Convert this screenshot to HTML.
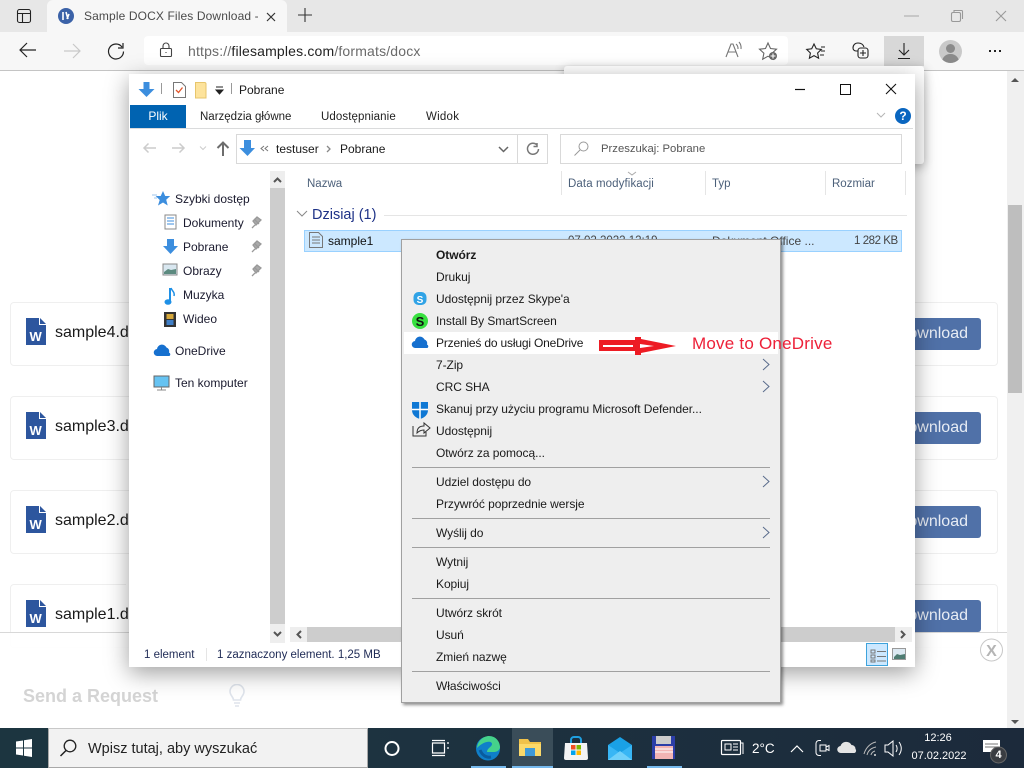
<!DOCTYPE html>
<html lang="pl"><head><meta charset="utf-8"><title>Sample DOCX Files Download</title>
<style>
html,body{margin:0;padding:0;width:1024px;height:768px;overflow:hidden;background:#fff;font-family:"Liberation Sans","Noto Sans CJK JP",sans-serif;font-size:12px;color:#1a1a1a}
div,svg{position:absolute}
.t{white-space:nowrap;line-height:16px}
.card{left:10px;width:986px;height:62px;border:1px solid #efefef;border-radius:4px;background:#fff}
.btn{left:880px;width:101px;height:32px;background:#5071a8;border-radius:3px;color:#e8edf5;font-size:16px;line-height:31px;text-align:right}
.btn span{padding-right:13px}
.m{left:436px;color:#1a1a1a;font-size:12px;letter-spacing:-.06px}
.sep{left:412px;width:358px;height:1px;background:#a0a0a0}
.n{color:#1a1a2e;font-size:12px}
</style></head><body>

<!-- browser chrome -->
<div style="left:0;top:0;width:1024px;height:32px;background:#e7e7e7"></div>
<div style="left:47px;top:0;width:240px;height:32px;background:#f7f7f7;border-radius:6px 6px 0 0"></div>
<div style="left:0;top:32px;width:1024px;height:38px;background:#f7f7f7"></div>
<div style="left:0;top:70px;width:1024px;height:1px;background:#c4c4c4"></div>
<div style="left:144px;top:36px;width:644px;height:29px;background:#fff;border-radius:4px"></div>
<div style="left:884px;top:36px;width:40px;height:30px;background:#d8d8d8"></div>
<div class="t" style="left:84px;top:8px;width:174px;overflow:hidden;font-size:12px;color:#4a4a4a;letter-spacing:.12px">Sample DOCX Files Download - C</div>
<div class="t" style="left:188px;top:43px;font-size:14px;color:#6a6a6a;letter-spacing:.17px">https://<span style="color:#222">filesamples.com</span>/formats/docx</div>
<svg style="left:0;top:0" width="1024" height="70" fill="none" stroke="#222" stroke-width="1.100">
<rect x="17.500" y="9.500" width="13" height="13" rx="2"/><path d="M18 13.500h12M22.500 14v8"/>
<circle cx="66" cy="16" r="8" fill="#3b62a8" stroke="none"/><path d="M63 12v8M66 12l2 7M69 14l-2 5" stroke="#fff" stroke-width="1.600"/>
<path d="M267 13l8 8M275 13l-8 8" stroke="#333" stroke-width="1.200"/>
<path d="M305 8v14M298 15h14" stroke="#333"/>
<path d="M36 50H20M27 43l-7 7 7 7" stroke="#222" stroke-width="1.200"/>
<path d="M64 51h16M73 44l7 7-7 7" stroke="#c8c8c8" stroke-width="1.200"/>
<path d="M122 47a7.500 7.500 0 1 0 1.500 4.500M123 43v5h-5" stroke="#222" stroke-width="1.200"/>
<rect x="160.500" y="48.500" width="11" height="8" rx="1" stroke="#444"/><path d="M163 48v-2a3 3 0 0 1 6 0v2M166 52v1" stroke="#444"/>
<path d="M904 16h15" stroke="#adadad"/>
<rect x="951.500" y="12.500" width="9" height="9" rx="1.500" stroke="#999"/><path d="M954 12v-1.500h7.500a1 1 0 0 1 1 1V19" stroke="#999"/>
<path d="M996 11l10 10M1006 11l-10 10" stroke="#999"/>
<path d="M726 57l5-13h2l5 13M728 52h8" stroke="#777"/><path d="M736 44a6 6 0 0 1 2 5M739 42a9 9 0 0 1 2 7" stroke="#777"/>
<path d="M768 43l2.500 5.500 6 .7-4.400 4 1.200 6-5.300-3-5.300 3 1.200-6-4.400-4 6-.7z" stroke="#666"/>
<circle cx="773" cy="56" r="4" fill="#666" stroke="none"/><path d="M773 53.500v5M770.500 56h5" stroke="#fff"/>
<path d="M814 44l2.300 4.800 5 .6-3.700 3.600 1 5.200-4.600-2.600-4.600 2.600 1-5.200-3.700-3.600 5-.6zM821 47h4M821 51h4M820 55h4" stroke="#222"/>
<rect x="858" y="48" width="10" height="10" rx="2.500"/><path d="M863 50v6M860 53h6M858 51h-2a3 3 0 0 1-3-3c0-3 2-5 5-5 3 0 5 1 6 4" stroke="#222"/>
<path d="M904 43v12M899 50l5 5 5-5M898 58.500h12" stroke="#222"/>
<path d="M989 51h2M994 51h2M999 51h2" stroke="#222" stroke-width="2"/>
</svg>
<div style="left:939px;top:40px;width:23px;height:23px;border-radius:50%;background:#c9c9c9;overflow:hidden">
<div style="left:7px;top:4px;width:9px;height:9px;border-radius:50%;background:#8a8a8a"></div>
<div style="left:3px;top:14px;width:17px;height:12px;border-radius:8px 8px 0 0;background:#8a8a8a"></div></div>

<!-- page -->
<div style="left:1007px;top:71px;width:17px;height:657px;background:#f0f0f0"></div>
<div style="left:1008px;top:205px;width:14px;height:188px;background:#bebebe"></div>
<svg style="left:1007px;top:71px" width="17" height="657"><path d="M4 11l4-4 4 4z" fill="#555"/><path d="M4 649l4 4 4-4z" fill="#555"/></svg>

<div class="card" style="top:302px"></div><div class="card" style="top:396px"></div><div class="card" style="top:490px"></div><div class="card" style="top:584px"></div>
<div class="btn" style="top:318px"><span style="position:absolute;right:0;white-space:nowrap">Download</span></div>
<div class="btn" style="top:412px"><span style="position:absolute;right:0;white-space:nowrap">Download</span></div>
<div class="btn" style="top:506px"><span style="position:absolute;right:0;white-space:nowrap">Download</span></div>
<div class="btn" style="top:600px"><span style="position:absolute;right:0;white-space:nowrap">Download</span></div>
<div class="t" style="left:55px;top:324px;font-size:16px;line-height:18px">sample4.docx</div>
<div class="t" style="left:55px;top:418px;font-size:16px;line-height:18px">sample3.docx</div>
<div class="t" style="left:55px;top:512px;font-size:16px;line-height:18px">sample2.docx</div>
<div class="t" style="left:55px;top:606px;font-size:16px;line-height:18px">sample1.docx</div>
<svg style="left:26px;top:318px" width="20" height="27"><path d="M0 0h13v7h7v20H0z" fill="#2d569e"/><path d="M14 0l6 6h-6z" fill="#2d569e"/><text x="3.500" y="23" font-family="Liberation Sans" font-weight="bold" font-size="13" fill="#fff">W</text></svg>
<svg style="left:26px;top:412px" width="20" height="27"><path d="M0 0h13v7h7v20H0z" fill="#2d569e"/><path d="M14 0l6 6h-6z" fill="#2d569e"/><text x="3.500" y="23" font-family="Liberation Sans" font-weight="bold" font-size="13" fill="#fff">W</text></svg>
<svg style="left:26px;top:506px" width="20" height="27"><path d="M0 0h13v7h7v20H0z" fill="#2d569e"/><path d="M14 0l6 6h-6z" fill="#2d569e"/><text x="3.500" y="23" font-family="Liberation Sans" font-weight="bold" font-size="13" fill="#fff">W</text></svg>
<svg style="left:26px;top:600px" width="20" height="27"><path d="M0 0h13v7h7v20H0z" fill="#2d569e"/><path d="M14 0l6 6h-6z" fill="#2d569e"/><text x="3.500" y="23" font-family="Liberation Sans" font-weight="bold" font-size="13" fill="#fff">W</text></svg>

<!-- bottom request bar -->
<div style="left:0;top:632px;width:1007px;height:96px;background:rgba(255,255,255,.92);border-top:1px solid #d8d8d8;box-sizing:border-box"></div>
<div class="t" style="left:23px;top:686px;font-size:18px;line-height:20px;font-weight:bold;color:#d4d4d4">Send a Request</div>
<svg style="left:228px;top:684px" width="18" height="24" fill="none" stroke="#dfe4ec" stroke-width="1.600"><path d="M5.500 16c0-3-3.500-4.500-3.500-8.500a7 7 0 0 1 14 0c0 4-3.500 5.500-3.500 8.500z"/><path d="M6 19h6M7 22h4"/></svg>
<svg style="left:980px;top:638px" width="24" height="25"><circle cx="11.500" cy="12" r="11" fill="#fff" stroke="#c8c8c8" stroke-width="1"/><text x="11.500" y="18" text-anchor="middle" font-family="Liberation Sans" font-weight="bold" font-size="16" fill="#b5b5b5">X</text></svg>

<!-- download flyout -->
<div style="left:564px;top:66px;width:360px;height:98px;background:#fff;border-radius:3px;box-shadow:0 3px 10px rgba(0,0,0,.3)"></div>
<div style="left:126px;top:581px;width:6px;height:15px;background:#fff"></div>

<!-- explorer window -->
<div style="left:129px;top:74px;width:786px;height:593px;background:#fff;box-shadow:0 6px 22px rgba(0,0,0,.38)"></div>
<svg style="left:129px;top:74px" width="786" height="100" fill="none">
<path d="M14 8h6v7h5l-8 8-8-8h5z" fill="#3c8ede" transform="translate(.5,0)"/>
<path d="M32.500 9v11M102.500 9v11" stroke="#999"/>
<path d="M44.500 8.500h8l4 4v11h-12z" fill="#fff" stroke="#777"/>
<path d="M47 16l2.500 2.500 4-5" stroke="#e2562b" stroke-width="1.300"/>
<path d="M66.500 8.500h9a1.500 1.500 0 0 1 1.500 1.500v14H66.500z" fill="#fde39c" stroke="#e7c56b"/>
<path d="M87 13h7M87 16h7l-3.500 4z" stroke="#222" fill="#222"/>
<path d="M666 15.500h10" stroke="#111" stroke-width="1.200"/>
<path d="M757 10l10 10M767 10l-10 10" stroke="#111" stroke-width="1.100"/>
<path d="M748 39l4 4 4-4" stroke="#b5b5b5"/>
</svg>
<div style="left:840px;top:84px;width:9px;height:9px;border:1px solid #111"></div>
<div class="t" style="left:239px;top:82px;font-size:12px;color:#1a1a1a">Pobrane</div>
<div style="left:130px;top:105px;width:56px;height:23px;background:#0063b1;color:#fff;font-size:12px;line-height:23px;text-align:center">Plik</div>
<div class="t" style="left:200px;top:109px;font-size:11.500px;color:#222">Narzędzia główne</div>
<div class="t" style="left:321px;top:109px;font-size:11.500px;letter-spacing:.1px;color:#222">Udostępnianie</div>
<div class="t" style="left:426px;top:109px;font-size:11.500px;letter-spacing:.25px;color:#222">Widok</div>
<div style="left:130px;top:128px;width:783px;height:1px;background:#dadbdc"></div>
<div style="left:895px;top:108px;width:16px;height:16px;border-radius:50%;background:#0a66c0;color:#fff;font:bold 12px/16px 'Liberation Sans',sans-serif;text-align:center">?</div>

<!-- address row -->
<div style="left:236px;top:134px;width:280px;height:28px;border:1px solid #d9d9d9"></div>
<div style="left:517px;top:134px;width:30px;height:28px;border:1px solid #d9d9d9;border-left:none"></div>
<div style="left:560px;top:134px;width:340px;height:28px;border:1px solid #d9d9d9"></div>
<svg style="left:140px;top:137px" width="410" height="24" fill="none">
<path d="M16 11H4M8.500 6.500L4 11l4.500 4.500M44 11H32M39.500 6.500L44 11l-4.500 4.500" stroke="#ccc" stroke-width="1.500"/>
<path d="M60 9.500l3 3 3-3" stroke="#ccc"/>
<path d="M83 19V6M77.500 11L83 5.500l5.500 5.500" stroke="#6d6d6d" stroke-width="2"/>
<path d="M104 3h7v8h4l-7.500 8L99.500 11h4.500z" fill="#3c8ede"/>
<path d="M124 9l-3 2.500 3 2.500M128 9l-3 2.500 3 2.500" stroke="#777"/>
<path d="M187 9l3 3-3 3" stroke="#888" stroke-width="1.300"/>
<path d="M359 10l4.500 4.500L368 10" stroke="#666" stroke-width="1.500"/>
<path d="M397 8a5.500 5.500 0 1 0 1.500 4M397 6v3.500h-3.500" stroke="#777" stroke-width="1.500"/>
</svg>
<svg style="left:573px;top:140px" width="18" height="18" fill="none" stroke="#999"><circle cx="10.500" cy="6.500" r="4.500"/><path d="M7 10l-5.500 5.500"/></svg>
<div class="t" style="left:276px;top:141px;font-size:12px;color:#1a1a1a">testuser</div>
<div class="t" style="left:340px;top:141px;font-size:12px;color:#1a1a1a">Pobrane</div>
<div class="t" style="left:601px;top:141px;font-size:11.300px;color:#555">Przeszukaj: Pobrane</div>

<!-- nav pane -->
<div style="left:270px;top:171px;width:15px;height:472px;background:#eeeeee"></div>
<div style="left:270px;top:188px;width:15px;height:436px;background:#cdcdcd"></div>
<svg style="left:270px;top:171px" width="15" height="472" fill="none" stroke="#555" stroke-width="2"><path d="M4 11l3.500-3.500L11 11M4 461l3.500 3.500L11 461"/></svg>
<svg style="left:150px;top:188px" width="120" height="205">
<path d="M13 3l2.200 5h5l-4 3.800 1.500 5.700-4.700-3-5 3 1.700-5.500-4-4h5z" fill="#3c8ede"/><path d="M2 7h5M4 10h3" stroke="#9cc5ee"/>
<rect x="15" y="27" width="11" height="14" fill="#fff" stroke="#888"/><path d="M17 30h7M17 33h7M17 36h7" stroke="#3c8ede"/>
<path d="M17 51h7v7h4l-7.500 8-7.500-8h4z" fill="#3c8ede"/>
<rect x="13" y="76" width="14" height="11" fill="#d9e7f0" stroke="#888"/><path d="M14 84l4-3 3 1 5-1v5H14z" fill="#5c8a7f"/>
<path d="M20 100v14" stroke="#1e90e6" stroke-width="2"/><ellipse cx="18" cy="114" rx="3.500" ry="2.800" fill="#1e90e6"/><path d="M21 100c1 3 4 4 3 8" stroke="#1e90e6" fill="none" stroke-width="1.500"/>
<rect x="14" y="124" width="12" height="15" fill="#333"/><rect x="16.500" y="126" width="7" height="5" fill="#d5a73a"/><rect x="16.500" y="132" width="7" height="5" fill="#3f7fc7"/>
<path d="M7.500 168a3.500 3.500 0 0 1-.5-7 5 5 0 0 1 9.500-1.500 3.800 3.800 0 0 1 2.500 5 2 2 0 0 1 .5 3.500z" fill="#1670cf"/>
<rect x="4" y="188" width="15" height="11" fill="#66c3f2" stroke="#666"/><path d="M7 202h9M11.500 199v3" stroke="#888"/>
<path d="M104 31l5 5M111 32l-4-3-4 4 3 4zM105 37l-3 3" stroke="#999" stroke-width="1.300" fill="#aaa"/>
<path d="M104 55l5 5M111 56l-4-3-4 4 3 4zM105 61l-3 3" stroke="#999" stroke-width="1.300" fill="#aaa"/>
<path d="M104 79l5 5M111 80l-4-3-4 4 3 4zM105 85l-3 3" stroke="#999" stroke-width="1.300" fill="#aaa"/>
</svg>
<div class="t n" style="left:175px;top:191px">Szybki dostęp</div>
<div class="t n" style="left:183px;top:215px">Dokumenty</div>
<div class="t n" style="left:183px;top:239px">Pobrane</div>
<div class="t n" style="left:183px;top:263px">Obrazy</div>
<div class="t n" style="left:183px;top:287px">Muzyka</div>
<div class="t n" style="left:183px;top:311px">Wideo</div>
<div class="t n" style="left:175px;top:343px">OneDrive</div>
<div class="t n" style="left:175px;top:375px">Ten komputer</div>

<!-- file list -->
<div style="left:561px;top:171px;width:1px;height:24px;background:#e5e5e5"></div>
<div style="left:705px;top:171px;width:1px;height:24px;background:#e5e5e5"></div>
<div style="left:825px;top:171px;width:1px;height:24px;background:#e5e5e5"></div>
<div style="left:905px;top:171px;width:1px;height:24px;background:#e5e5e5"></div>
<div class="t" style="left:307px;top:176px;font-size:11.500px;color:#4c607a">Nazwa</div>
<div class="t" style="left:568px;top:176px;font-size:11.500px;letter-spacing:.1px;color:#4c607a">Data modyfikacji</div>
<div class="t" style="left:712px;top:176px;font-size:11.500px;color:#4c607a">Typ</div>
<div class="t" style="left:832px;top:176px;font-size:11.500px;color:#4c607a">Rozmiar</div>
<svg style="left:290px;top:170px" width="350" height="60" fill="none" stroke="#aaa"><path d="M7 41l5 5 5-5" stroke="#888"/><path d="M338 2l4 3 4-3"/></svg>
<div style="left:384px;top:215px;width:523px;height:1px;background:#e5e5e5"></div>
<div class="t" style="left:312px;top:207px;font-size:14.500px;color:#1e3287">Dzisiaj (1)</div>
<div style="left:304px;top:230px;width:596px;height:20px;background:#cce8ff;border:1px solid #99d1ff"></div>
<svg style="left:308px;top:231px" width="16" height="18" fill="none" stroke="#777"><path d="M1.500 1.500h9l4 4v11h-13zM4 6h8M4 9h8M4 12h8"/></svg>
<div class="t" style="left:328px;top:233px;font-size:12px;color:#111">sample1</div>
<div class="t" style="left:568px;top:233px;font-size:11.500px;color:#444">07.02.2022 12:19</div>
<div class="t" style="left:712px;top:233px;font-size:12px;color:#444">Dokument Office ...</div>
<div class="t" style="left:854px;top:233px;font-size:11.500px;letter-spacing:-.45px;color:#444">1 282 KB</div>

<div style="left:290px;top:627px;width:622px;height:15px;background:#eeeeee"></div>
<div style="left:307px;top:627px;width:588px;height:15px;background:#cdcdcd"></div>
<svg style="left:290px;top:627px" width="622" height="15" fill="none" stroke="#555" stroke-width="2"><path d="M11 4L7.500 7.500 11 11M611 4l3.500 3.500L611 11"/></svg>

<div class="t" style="left:144px;top:647px;font-size:11.500px;color:#1e2a55">1 element</div>
<div style="left:206px;top:648px;width:1px;height:13px;background:#e5e5e5"></div>
<div class="t" style="left:217px;top:647px;font-size:11.500px;color:#1e2a55">1 zaznaczony element. 1,25 MB</div>
<div style="left:866px;top:643px;width:20px;height:21px;background:#cce8ff;border:1px solid #3ea3dc"></div>
<svg style="left:866px;top:643px" width="46" height="23" fill="none"><path d="M5 7h4v3H5zM5 12h4v3H5zM5 17h4v2H5z" stroke="#777"/><path d="M11 8.500h9M11 13.500h9M11 18h9" stroke="#777"/><rect x="26.500" y="5.500" width="13" height="11" fill="#dce9f2" stroke="#999"/><path d="M28 14l3-3 3 1 5-1v5H28z" fill="#4e7c72"/></svg>

<!-- context menu -->
<div style="left:401px;top:239px;width:378px;height:462px;background:#eeeeee;border:1px solid #a0a0a0;box-shadow:2px 2px 3px rgba(0,0,0,.45)"></div>
<div style="left:404px;top:332px;width:374px;height:22px;background:#fff"></div>
<div class="t m" style="top:247px;font-weight:bold">Otwórz</div>
<div class="t m" style="top:269px">Drukuj</div>
<div class="t m" style="top:291px">Udostępnij przez Skype'a</div>
<div class="t m" style="top:313px">Install By SmartScreen</div>
<div class="t m" style="top:335px;letter-spacing:-.18px">Przenieś do usługi OneDrive</div>
<div class="t m" style="top:357px">7-Zip</div>
<div class="t m" style="top:379px">CRC SHA</div>
<div class="t m" style="top:401px">Skanuj przy użyciu programu Microsoft Defender...</div>
<div class="t m" style="top:423px">Udostępnij</div>
<div class="t m" style="top:445px">Otwórz za pomocą...</div>
<div class="sep" style="top:467px"></div>
<div class="t m" style="top:474px">Udziel dostępu do</div>
<div class="t m" style="top:496px">Przywróć poprzednie wersje</div>
<div class="sep" style="top:518px"></div>
<div class="t m" style="top:525px">Wyślij do</div>
<div class="sep" style="top:547px"></div>
<div class="t m" style="top:554px">Wytnij</div>
<div class="t m" style="top:576px">Kopiuj</div>
<div class="sep" style="top:598px"></div>
<div class="t m" style="top:605px">Utwórz skrót</div>
<div class="t m" style="top:627px">Usuń</div>
<div class="t m" style="top:649px">Zmień nazwę</div>
<div class="sep" style="top:671px"></div>
<div class="t m" style="top:678px">Właściwości</div>
<svg style="left:401px;top:285px" width="380" height="260" fill="none">
<rect x="12.500" y="7" width="13" height="13" rx="5" fill="#30a3e6"/><text x="19" y="18" text-anchor="middle" font-family="Liberation Sans" font-weight="bold" font-size="10" fill="#fff">S</text>
<circle cx="19" cy="36" r="8" fill="#37e03f"/><text x="19" y="41" text-anchor="middle" font-family="Liberation Sans" font-weight="bold" font-size="13" fill="#111">S</text>
<path d="M7.500 168a3.500 3.500 0 0 1-.5-7 5 5 0 0 1 9.500-1.500 3.800 3.800 0 0 1 2.500 5 2 2 0 0 1 .5 3.500z" fill="#1670cf" transform="translate(7,-105)"/>
<path d="M362 74l6 5.500-6 5.500M362 96l6 5.500-6 5.500M362 191l6 5.500-6 5.500M362 242l6 5.500-6 5.500" stroke="#5a6c8c"/>
<path d="M11 117h16v8c0 5-4 8-8 9-4-1-8-4-8-9z" fill="#0f78d4"/>
<path d="M19 117v17M11 124.500h16" stroke="#fff" stroke-width="1.500"/>
<path d="M12 141v10h13v-4M16 148c0-5 3-7 7-7v-3l6 5-6 5v-3c-3 0-5 1-7 3z" stroke="#333"/>
</svg>
<svg style="left:598px;top:336px" width="80" height="20"><path d="M1 4h36V1h6v2l35 7-35 7v2h-6v-4H1z" fill="#ed1c24"/><path d="M5 10h30" stroke="#fff" stroke-width="2"/><path d="M42 8l14 2-14 2z" fill="#fff"/></svg>
<div class="t" style="left:692px;top:335px;font-size:17px;letter-spacing:.22px;line-height:18px;color:#ed2038">Move to OneDrive</div>

<!-- taskbar -->
<div style="left:0;top:728px;width:1024px;height:40px;background:linear-gradient(90deg,#1c3540,#1d3340 35%,#1c2a3b)"></div>
<div style="left:48px;top:728px;width:320px;height:40px;background:#f2f2f2;box-sizing:border-box;border:1px solid #a8a8a8;border-top:1px solid #c8c8c8"></div>
<div style="left:512px;top:728px;width:41px;height:40px;background:#3a4d59"></div>
<div style="left:471px;top:766px;width:35px;height:2px;background:#76b9ed"></div>
<div style="left:512px;top:766px;width:41px;height:2px;background:#76b9ed"></div>
<div style="left:647px;top:766px;width:35px;height:2px;background:#76b9ed"></div>
<svg style="left:0;top:728px" width="1024" height="40" fill="none">
<path d="M16 13.500l7-1v7h-7zM24 12.300l8-1.300v8.500h-8zM16 20.500h7v7l-7-1zM24 20.500h8V29l-8-1.300z" fill="#fff"/>
<circle cx="70" cy="18" r="5.800" stroke="#222" stroke-width="1.300"/><path d="M66 22.500l-5.500 5.500" stroke="#222" stroke-width="1.500"/>
<circle cx="392" cy="20.500" r="6.500" stroke="#fff" stroke-width="2"/>
<path d="M432.500 15h12v10h-12zM432 12.500h13M432 27.500h13M447 15h2M447 20h2" stroke="#fff" stroke-width="1.200"/>
<circle cx="488" cy="20.500" r="12" fill="#0f7fc9"/><path d="M477 20c1-9 8-12 12-12 7 0 11 6 11 11 0 3-3 5-6 5h-7c0-4 5-5 5-8s-7-4-15 4z" fill="#45d28b"/><path d="M480 22c2 5 6 8 11 7" stroke="#0a5b9e" stroke-width="3"/>
<path d="M519 11h9l2 3h11v3h-22z" fill="#f0c24a"/><path d="M519 16h22v12h-22z" fill="#fbd96a"/><rect x="525" y="20" width="10" height="8" fill="#3f9ad9"/>
<g transform="translate(0,-2)"><path d="M565 17h22l1 15a2 2 0 0 1-2 2h-20a2 2 0 0 1-2-2z" fill="#f4f4f4"/><path d="M571 17v-3a3 3 0 0 1 3-3h4a3 3 0 0 1 3 3v3" stroke="#1fa0e0" stroke-width="2"/>
<rect x="571" y="19" width="4.500" height="4.500" fill="#f25022"/><rect x="576.500" y="19" width="4.500" height="4.500" fill="#7fba00"/><rect x="571" y="24.500" width="4.500" height="4.500" fill="#00a4ef"/><rect x="576.500" y="24.500" width="4.500" height="4.500" fill="#ffb900"/></g>
<path d="M608 17l12-8 12 8v15h-24z" fill="#1aa1e6"/><path d="M608 17l12 8 12-8v15h-24z" fill="#38b6f5"/>
<path d="M608 32l12-9 12 9z" fill="#6fd0fa"/>
<rect x="652" y="8" width="23" height="23" fill="#2c3ea8"/><rect x="656" y="8" width="15" height="8" fill="#ccc"/><rect x="655" y="18" width="18" height="13" fill="#f2b4b4"/><path d="M655 21h18M655 24h18" stroke="#fff"/>
<rect x="721.500" y="12.500" width="19" height="14" rx="1" stroke="#fff" stroke-width="1.200"/><rect x="725" y="16" width="6" height="6" stroke="#fff"/><path d="M733 16h5M733 19h5M733 22h5M740 15h3v11" stroke="#fff"/>
<path d="M791 24l6-6 6 6" stroke="#fff" stroke-width="1.200"/>
<path d="M821 12.500h-2a3 3 0 0 0-3 3v9a3 3 0 0 0 3 3h2M820 17h6v6h-6zM826 19l3-1.500v5L826 21" stroke="#fff"/>
<path d="M841 25a3.500 3.500 0 0 1-.5-7 6 6 0 0 1 11-1 4 4 0 0 1 4 4 2.500 2.500 0 0 1-1 4z" fill="#e4e4e4"/>
<path d="M864 26c2-7 7-11 12-12M867 27c1-4 4-7 9-8M871 27c.5-2 2-3.500 4-4" stroke="#bbb"/><circle cx="875" cy="27" r="1" fill="#ddd"/>
<path d="M885 17h3l5-4v15l-5-4h-3zM896 17c1.500 2 1.500 5 0 7M899 14c3 4 3 9 0 13" stroke="#fff"/>
<path d="M983 12h17v12h-14l-3 0z" fill="#fff"/><path d="M985 16h13M985 19h13" stroke="#777"/>
<circle cx="998.500" cy="27" r="8" fill="#3a3d42" stroke="#666"/>
</svg>
<div class="t" style="left:88px;top:741px;font-size:14.500px;color:#222">Wpisz tutaj, aby wyszukać</div>
<div class="t" style="left:752px;top:741px;font-size:13.500px;color:#fff">2°C</div>
<div class="t" style="left:904px;top:730px;width:68px;text-align:center;font-size:11px;color:#fff">12:26</div>
<div class="t" style="left:904px;top:748px;width:70px;text-align:center;font-size:11px;color:#fff">07.02.2022</div>
<div class="t" style="left:990.500px;top:747px;width:16px;text-align:center;font-size:11px;font-weight:bold;color:#fff">4</div>

</body></html>
